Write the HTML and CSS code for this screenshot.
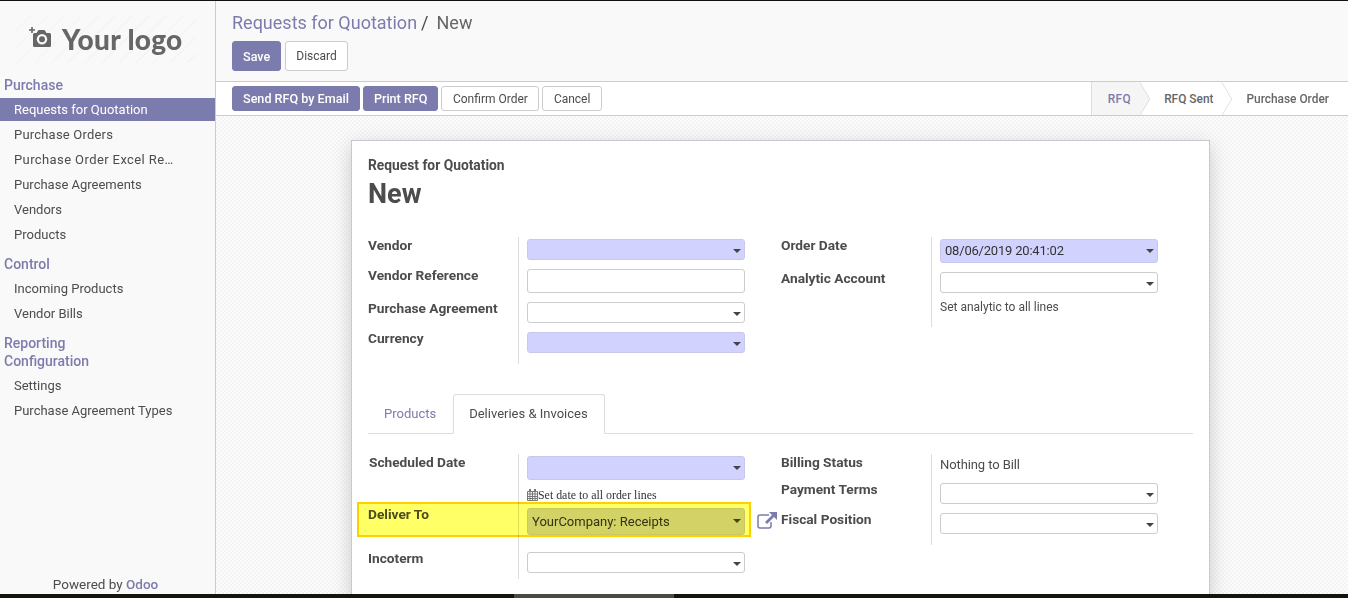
FILE: index.html
```html
<!DOCTYPE html>
<html lang="en">
<head>
  <meta charset="UTF-8" />
  <meta name="viewport" content="width=device-width, initial-scale=1.0" />
  <title>Requests for Quotation</title>
  <link rel="stylesheet" href="styles.css">
</head>
<body>
  <div class="app">
    <aside class="sidebar">
      <div class="logo">
        <svg class="logo-icon" width="22" height="20" viewBox="0 0 22 20">
          <path d="M2.200 0h1.600v2.200H6v1.600H3.800V6H2.200V3.800H0V2.200h2.200z" fill="#666"/>
          <path d="M4 7.500A1.500 1.500 0 0 1 5.500 6H7.500l2-3h6l2 3H20.500a1.500 1.500 0 0 1 1.500 1.500V18.500a1.500 1.500 0 0 1-1.500 1.500H5.500A1.500 1.500 0 0 1 4 18.500z" fill="#666"/>
          <circle cx="13" cy="12.300" r="5.200" fill="#f9f9f9"/>
          <circle cx="13" cy="12.300" r="3" fill="#666"/>
        </svg>
        <span class="logo-text">Your logo</span>
      </div>
      <div class="menu-head first">Purchase</div>
      <a class="menu-item active">Requests for Quotation</a>
      <a class="menu-item wide">Purchase Orders</a>
      <a class="menu-item wider">Purchase Order Excel Re…</a>
      <a class="menu-item">Purchase Agreements</a>
      <a class="menu-item">Vendors</a>
      <a class="menu-item">Products</a>
      <div class="menu-head next">Control</div>
      <a class="menu-item">Incoming Products</a>
      <a class="menu-item">Vendor Bills</a>
      <div class="menu-head next">Reporting</div>
      <div class="menu-head second">Configuration</div>
      <a class="menu-item">Settings</a>
      <a class="menu-item">Purchase Agreement Types</a>
      <div class="powered">Powered by <span class="odoo">Odoo</span></div>
    </aside>

    <main class="content">
      <div class="control-panel">
        <div class="breadcrumb"><span class="crumb">Requests for Quotation</span><span class="sep">/</span><span class="current">New</span></div>
        <div class="cp-buttons">
          <button class="btn primary big">Save</button>
          <button class="btn big">Discard</button>
        </div>
      </div>

      <div class="statusbar">
        <div class="actions">
          <button class="btn primary">Send RFQ by Email</button>
          <button class="btn primary">Print RFQ</button>
          <button class="btn">Confirm Order</button>
          <button class="btn">Cancel</button>
        </div>
        <div class="stages">
          <span class="stage first">RFQ</span>
          <span class="stage">RFQ Sent</span>
          <span class="stage">Purchase Order</span>
        </div>
      </div>

      <div class="sheet-bg">
        <div class="sheet">
          <div class="doc-type">Request for Quotation</div>
          <h1 class="doc-name">New</h1>

          <div class="group-row top">
            <div class="group left">
              <div class="labels">
                <label class="h-vendor">Vendor</label>
                <label class="h-ref">Vendor Reference</label>
                <label class="h-agree">Purchase Agreement</label>
                <label>Currency</label>
              </div>
              <div class="fields">
                <div class="select required"></div>
                <div class="input"></div>
                <div class="select"></div>
                <div class="select required last"></div>
              </div>
            </div>
            <div class="group right">
              <div class="labels">
                <label class="h-date">Order Date</label>
                <label>Analytic Account</label>
              </div>
              <div class="fields">
                <div class="select required tall date">08/06/2019 20:41:02</div>
                <div class="select"></div>
                <div class="help">Set analytic to all lines</div>
              </div>
            </div>
          </div>

          <div class="tabs">
            <a class="tab">Products</a>
            <a class="tab active">Deliveries &amp; Invoices</a>
          </div>

          <div class="group-row bottom">
            <div class="group left">
              <div class="labels">
                <label class="sched">Scheduled Date</label>
                <label class="deliver">Deliver To</label>
                <label class="inco">Incoterm</label>
              </div>
              <div class="fields">
                <div class="select required tall"></div>
                <div class="date-note">
                  <svg width="11" height="12" viewBox="0 0 11 12"><path d="M.5 2.500h10v9H.5zM.5 5h10M.5 7.500h10M.5 9.500h10M3 2.500v9M5.500 2.500v9M8 2.500v9" fill="none" stroke="#777"/><path d="M2 0h2v2.500H2zM7 0h2v2.500H7z" fill="#777"/></svg>Set date to all order lines
                </div>
                <div class="select required deliver-select">YourCompany: Receipts</div>
                <div class="select inco-select"></div>
              </div>
              <div class="highlight"></div>
              <svg class="ext-link" width="20" height="17" viewBox="0 0 20 17">
                <path d="M12 3H3a2 2 0 0 0-2 2v9a2 2 0 0 0 2 2h9a2 2 0 0 0 2-2v-4" fill="none" stroke="#7c7bad" stroke-width="1.500"/>
                <path d="M12 0h8v8l-3-3-7 7-2-2 7-7z" fill="#7c7bad"/>
              </svg>
            </div>
            <div class="group right">
              <div class="labels">
                <label class="billing">Billing Status</label>
                <label class="terms">Payment Terms</label>
                <label>Fiscal Position</label>
              </div>
              <div class="fields">
                <div class="plain">Nothing to Bill</div>
                <div class="select"></div>
                <div class="select last"></div>
              </div>
            </div>
          </div>
        </div>
      </div>
    </main>
  </div>
  <div class="taskbar"><span class="taskbar-tab"></span></div>
</body>
</html>
```
FILE: styles.css
```css
* {
  box-sizing: border-box;
}

html, body {
  height: 100%;
  margin: 0;
  overflow: hidden;
}

body {
  display: flex;
  flex-direction: column;
  background: #fff;
  color: #4c4c4c;
  font-family: 'Roboto', 'Liberation Sans', sans-serif;
  font-size: 13px;
  line-height: 18px;
  border-top: 1px solid #111;
}

.app {
  display: flex;
  flex: 1;
  min-height: 0;
}

.taskbar {
  height: 4px;
  background: #14130c;
  padding-left: 514px;
}

.taskbar-tab {
  display: block;
  width: 160px;
  height: 4px;
  background: #4a4a44;
}

/* sidebar */
.sidebar {
  position: relative;
  width: 216px;
  flex: none;
  background: #f9f9f9;
  border-right: 1px solid #ccc;
}

.logo {
  display: flex;
  align-items: center;
  margin: 14px 19px 0 16px;
  height: 48px;
  padding-left: 13px;
  background: repeating-linear-gradient(135deg, #f9f9f9 0 10px, #f5f5f5 10px 12px);
}

.logo-icon {
  margin: 0 11px 4px 0;
}

.logo-text {
  font-family: 'Lato', sans-serif;
  font-size: 28px;
  font-weight: 900;
  letter-spacing: .3px;
  color: #666;
}

.menu-head {
  padding-left: 4px;
  margin-top: 6px;
  height: 25px;
  line-height: 25px;
  font-size: 14px;
  font-weight: 500;
  color: #7c7bad;
}

.menu-head.first {
  margin-top: 10px;
}

.menu-head.next {
  height: 24px;
  margin-top: 5px;
}

.menu-head.second {
  height: 24px;
  margin-top: -6px;
}

.menu-item {
  display: block;
  height: 25px;
  padding-left: 14px;
  line-height: 25px;
  color: #4c4c4c;
}

.menu-item.wide {
  letter-spacing: .2px;
}

.menu-item.wider {
  letter-spacing: .4px;
}

.menu-item.active {
  height: 23px;
  line-height: 23px;
  margin-bottom: 1px;
  background: #7c7bad;
  color: #fff;
}

.powered {
  position: absolute;
  left: 0;
  right: 4px;
  bottom: 0;
  text-align: center;
  font-size: 13.500px;
  height: 19px;
}

.odoo {
  color: #7c7bad;
  font-weight: 500;
}

/* control panel */
.content {
  flex: 1;
  min-width: 0;
  display: flex;
  flex-direction: column;
}

.control-panel {
  height: 81px;
  padding: 10px 16px 0;
  background: #f9f9f9;
  border-bottom: 1px solid #ccc;
}

.breadcrumb {
  font-size: 18px;
  line-height: 24px;
  height: 30px;
}

.crumb {
  color: #7c7bad;
}

.sep {
  margin: 0 8px 0 4px;
}

.current {
  color: #666;
}

.cp-buttons {
  display: flex;
  gap: 4px;
}

.btn {
  height: 25px;
  padding: 0 10.500px;
  border: 1px solid #ccc;
  border-radius: 3px;
  background: #fff;
  color: #4c4c4c;
  font-family: inherit;
  font-size: 12px;
}

.btn.big {
  height: 30px;
  padding: 0 10px;
}

.btn.primary {
  padding: 0 10px;
  background: #7c7bad;
  border-color: #7c7bad;
  color: #fff;
  font-size: 12.600px;
  font-weight: 500;
}

.statusbar {
  display: flex;
  justify-content: space-between;
  height: 34px;
  background: #fff;
  border-bottom: 1px solid #ccc;
  padding-left: 16px;
}

.actions {
  display: flex;
  gap: 3px;
  padding-top: 4px;
}

.stages {
  display: flex;
  margin-right: 3px;
  border-left: 1px solid #ddd;
  font-size: 11.900px;
  font-weight: 500;
  color: #666;
  overflow: hidden;
}

.stage {
  position: relative;
  display: flex;
  align-items: center;
  padding: 0 9px 0 24px;
  background: #fff;
}

.stage.first {
  padding-left: 16px;
  background: #f5f5f5;
  color: #7c7bad;
  letter-spacing: .4px;
  z-index: 2;
}

.stage:nth-child(2) {
  z-index: 1;
}

.stage:last-child {
  padding-right: 16px;
}

/* chevron between stages */
.stage::after {
  content: "";
  position: absolute;
  right: -12px;
  top: 5px;
  width: 23px;
  height: 23px;
  transform: scaleX(.6) rotate(45deg);
  border-top: 1px solid #ddd;
  border-right: 1px solid #ddd;
  background: inherit;
}

.stage:last-child::after {
  display: none;
}

/* sheet */
.sheet-bg {
  flex: 1;
  min-height: 0;
  overflow: hidden;
  padding: 24px 0 0 135px;
  background-color: #fcfcfc;
  background-image: conic-gradient(#f3f3f3 25%, transparent 0 50%, #f3f3f3 0 75%, transparent 0);
  background-size: 4px 4px;
}

.sheet {
  width: 859px;
  height: 460px;
  padding: 15px 16px 0;
  background: #fff;
  border: 1px solid #c8c8d0;
  box-shadow: 0 5px 20px -1px rgba(0, 0, 0, .2);
}

.doc-type {
  font-size: 13.800px;
  font-weight: 700;
  line-height: 18px;
}

.doc-name {
  margin: 2px 0 0;
  font-size: 27px;
  line-height: 36px;
  font-weight: 700;
}

.group-row {
  display: flex;
  align-items: flex-start;
}

.group-row.top {
  margin-top: 25px;
}

.group-row.bottom {
  margin-top: 20px;
}

.group {
  position: relative;
  display: flex;
}

.group.left {
  width: 414px;
}

.group.right {
  width: 413px;
}

.labels {
  width: 151px;
  flex: none;
  border-right: 1px solid #ddd;
}

.labels label {
  display: block;
  font-weight: 700;
  font-size: 13.700px;
  line-height: 16px;
}

.fields {
  width: 227px;
  padding: 2px 0 0 8px;
}

.select,
.input {
  position: relative;
  width: 218px;
  height: 21px;
  padding-left: 4px;
  margin-bottom: 9px;
  line-height: 19px;
  border: 1px solid #ccc;
  border-radius: 3px;
  background: #fff;
  color: #333;
}

.input {
  height: 24px;
}

.select::after {
  content: "";
  position: absolute;
  right: 3px;
  top: 9px;
  border-top: 4px solid #444;
  border-left: 4px solid transparent;
  border-right: 4px solid transparent;
}

.select.required {
  background: #d2d2ff;
  border-color: #c8c8ee;
}

.select.tall {
  height: 24px;
  line-height: 22px;
}

.select.date {
  letter-spacing: -.2px;
}

.select.last {
  margin-bottom: 11px;
}

.help {
  margin-top: -3px;
  font-size: 12px;
  line-height: 16px;
  padding-bottom: 12px;
}

.h-vendor {
  margin-bottom: 14px;
}

.h-ref {
  margin-bottom: 17px;
}

.h-agree {
  margin-bottom: 14px;
}

.h-date {
  margin-bottom: 17px;
}

.plain {
  height: 16px;
  line-height: 18px;
  letter-spacing: -.1px;
  margin-bottom: 11px;
}

.date-note {
  display: flex;
  align-items: center;
  height: 16px;
  margin: -2px 0 5px;
  font-family: 'Liberation Serif', serif;
  font-size: 11.900px;
  color: #333;
}

.deliver-select {
  height: 27px;
  line-height: 25px;
  margin-bottom: 17px;
}

.deliver-select::after {
  top: 10px;
}

.inco-select {
  margin-bottom: 6px;
}

.bottom .sched {
  margin: 0 0 36px 1px;
}

.bottom .deliver {
  margin-bottom: 28px;
}

.bottom .billing {
  margin-bottom: 11px;
}

.bottom .terms {
  margin-bottom: 14px;
}

.highlight {
  position: absolute;
  left: -11px;
  top: 48px;
  width: 394px;
  height: 35px;
  border: 2px solid #fdd000;
  background: rgba(255, 255, 0, .6);
  mix-blend-mode: multiply;
}

.ext-link {
  position: absolute;
  left: 389px;
  top: 58px;
}

/* tabs */
.tabs {
  display: flex;
  margin-top: 30px;
  height: 40px;
  border-bottom: 1px solid #ddd;
}

.tab {
  padding: 1px 17px 0 16px;
  line-height: 38px;
  color: #7c7bad;
}

.tab.active {
  height: 40px;
  padding: 0 16px 0 15px;
  color: #4c4c4c;
  background: #fff;
  border: 1px solid #ddd;
  border-bottom: 1px solid #fff;
  border-radius: 3px 3px 0 0;
}
```
